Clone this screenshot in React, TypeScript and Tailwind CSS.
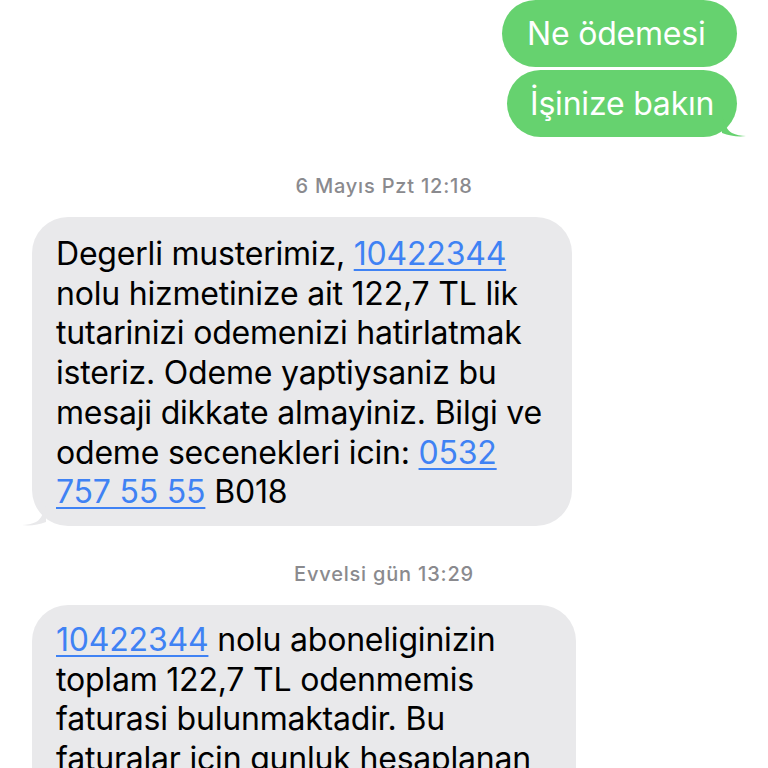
import React from "react";

const font = { fontFamily: 'Inter, "Liberation Sans", Arial, sans-serif' };

function Link({ children }: { children: React.ReactNode }) {
  return <span className="text-[#3f82f4] underline decoration-[1.5px] underline-offset-[4px]">{children}</span>;
}

function SentTail() {
  return (
    <svg className="absolute -right-[9px] bottom-0" width="24" height="22" viewBox="0 0 24 22" aria-hidden>
      <path d="M0 0 C2 10 6 16 10 18 C14 20 19 21 24 21 C16 22 8 21 0 18 Z" fill="#66d26f" />
    </svg>
  );
}

function RecvTail() {
  return (
    <svg className="absolute -left-[10px] bottom-0" width="24" height="22" viewBox="0 0 24 22" aria-hidden>
      <path d="M24 0 C22 10 18 16 14 18 C10 20 5 21 0 21 C8 22 16 21 24 18 Z" fill="#e9e9eb" />
    </svg>
  );
}

function Sent({ text, tail, className }: { text: string; tail?: boolean; className: string }) {
  return (
    <div className={`relative bg-[#66d26f] text-white rounded-[34px] h-[67px] flex items-center whitespace-nowrap text-[32px] tracking-[-0.2px] ${className}`}>
      {text}
      {tail && <SentTail />}
    </div>
  );
}

function Received({ lines, tail, className }: { lines: React.ReactNode[]; tail?: boolean; className: string }) {
  return (
    <div className={`relative bg-[#e9e9eb] rounded-[36px] text-black text-[32px] tracking-[-0.2px] leading-[39.7px] pl-[24px] ${className}`}>
      {lines.map((l, i) => (
        <div key={i} className="whitespace-nowrap">{l}</div>
      ))}
      {tail && <RecvTail />}
    </div>
  );
}

function Stamp({ children, className }: { children: React.ReactNode; className: string }) {
  return (
    <div className={`text-center text-[20px] font-medium tracking-[0.8px] text-[#8a8a8e] leading-[24px] ${className}`}>
      {children}
    </div>
  );
}

export default function App() {
  return (
    <div className="w-[768px] h-[768px] bg-white overflow-hidden" style={font}>
      <div className="flex flex-col items-end gap-[3px] pr-[31px]">
        <Sent className="w-[235px] pl-[25px]" text="Ne ödemesi" />
        <Sent className="w-[230px] pl-[23px]" text="İşinize bakın" tail />
      </div>

      <Stamp className="mt-[37px]">6 Mayıs Pzt 12:18</Stamp>

      <div className="pl-[32px] mt-[19px]">
        <Received
          tail
          className="w-[540px] pt-[17px] pb-[14px]"
          lines={[
            <>Degerli musterimiz, <Link>10422344</Link></>,
            "nolu hizmetinize ait 122,7 TL lik",
            "tutarinizi odemenizi hatirlatmak",
            "isteriz. Odeme yaptiysaniz bu",
            "mesaji dikkate almayiniz. Bilgi ve",
            <>odeme secenekleri icin: <Link>0532</Link></>,
            <><Link>757 55 55</Link> B018</>,
          ]}
        />
      </div>

      <Stamp className="mt-[36px]">Evvelsi gün 13:29</Stamp>

      <div className="pl-[32px] mt-[19px]">
        <Received
          className="w-[544px] pt-[15px] pb-[14px]"
          lines={[
            <><Link>10422344</Link> nolu aboneliginizin</>,
            "toplam 122,7 TL odenmemis",
            "faturasi bulunmaktadir. Bu",
            "faturalar icin gunluk hesaplanan",
            "gecikme bedeli uygulanacaktir.",
          ]}
        />
      </div>
    </div>
  );
}
